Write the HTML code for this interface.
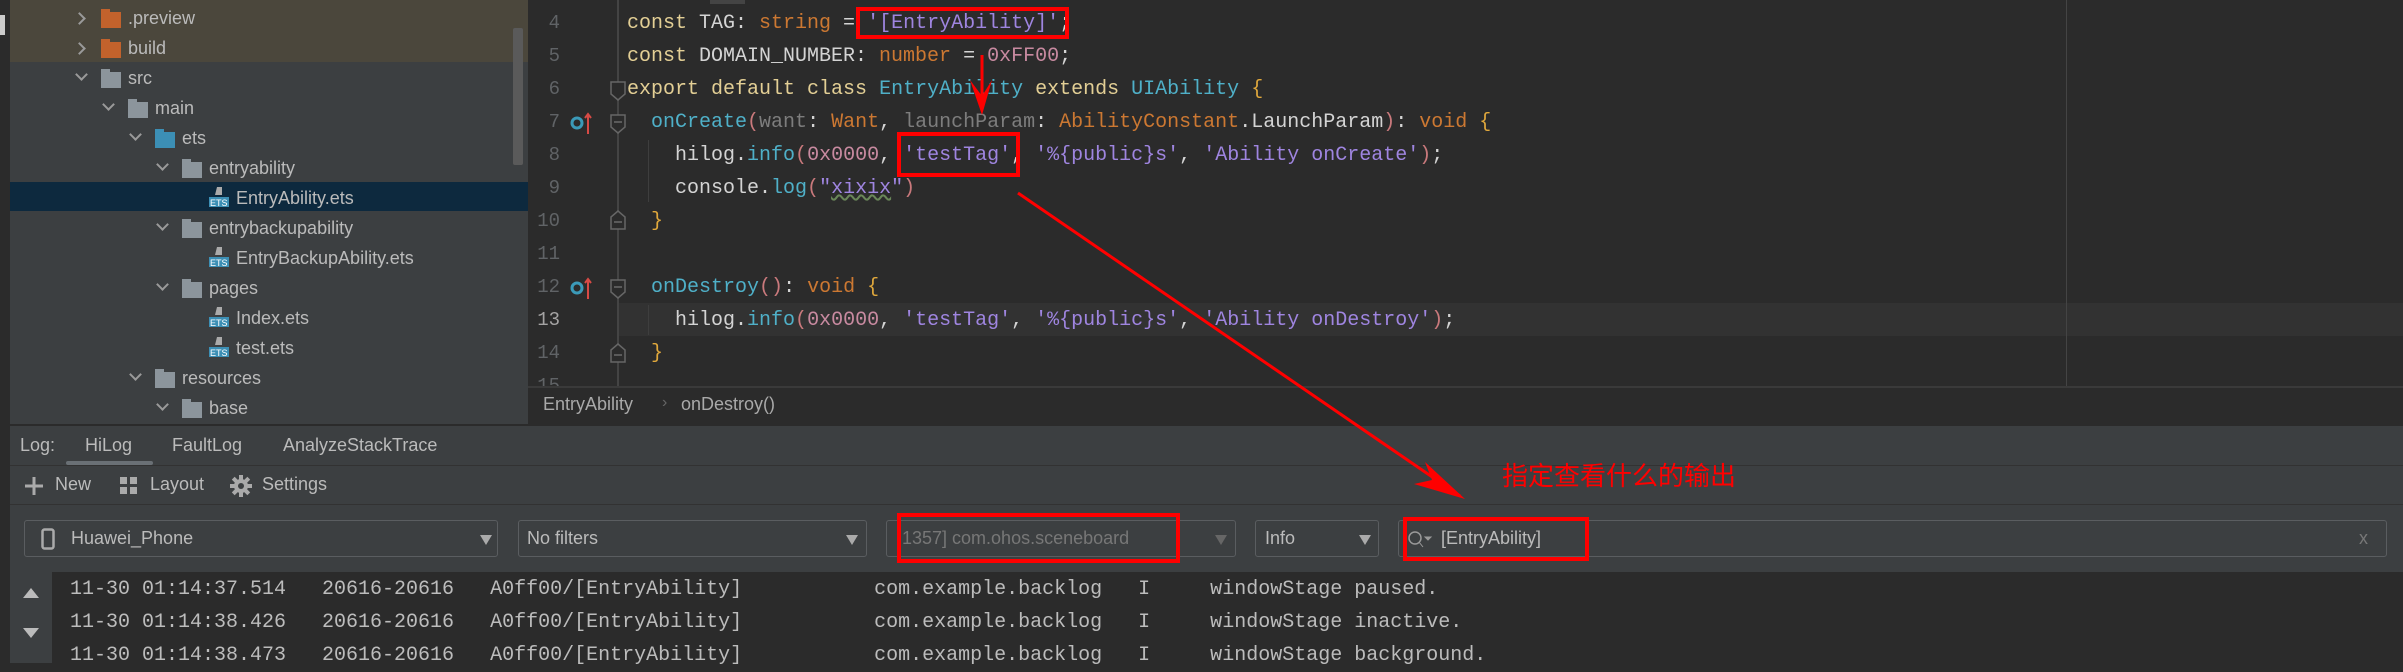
<!DOCTYPE html>
<html><head><meta charset="utf-8"><style>
*{margin:0;padding:0;box-sizing:border-box}
body{width:2403px;height:663px;overflow:hidden;background:#2b2b2b;position:relative;font-family:"Liberation Sans","Noto Sans CJK SC",sans-serif;color:#bbbbbb}
.a{position:absolute}
.tree{left:10px;top:0;width:518px;height:424px;background:#3c3f41}
.row{position:absolute;height:30px;font-size:18px;line-height:30px;color:#bbbbbb;white-space:nowrap}
.chev{position:absolute;width:9px;height:9px;border-right:2px solid #9a9a9a;border-bottom:2px solid #9a9a9a}
.fold{position:absolute;width:20px;height:16px;background:#8c959c}
.fold:before{content:"";position:absolute;left:0;top:-3px;width:9px;height:4px;background:inherit}
.ets{position:absolute;width:20px;height:22px}
.mono{font-family:"Liberation Mono","DejaVu Sans Mono",monospace}
.code{position:absolute;left:627px;font-size:20px;line-height:33px;height:33px;white-space:pre;color:#d4d4d4}
.ln{position:absolute;left:520px;width:40px;text-align:right;font-size:19px;line-height:33px;color:#606366}
.k{color:#e3cf95}.t{color:#cc7832}.s{color:#9f85e0}.f{color:#4fb0c8}.n{color:#c88aa0}.p{color:#c9797c}.g{color:#7d7d7d}.b{color:#e0a83c}
.dd{position:absolute;top:520px;height:37px;border:1px solid #5a5d60;border-radius:3px;background:#3c3f41;font-size:18px;line-height:35px;color:#bbbbbb}
.tri{position:absolute;width:0;height:0;border-left:6px solid transparent;border-right:6px solid transparent;border-top:10px solid #aaa}
.log{position:absolute;left:70px;font-size:20px;line-height:33px;white-space:pre;color:#bcbcbc}
.red{position:absolute;border:4px solid #f00}
</style></head><body>
<!-- left strip -->
<div class="a" style="left:0;top:0;width:10px;height:663px;background:#2b2b2b"></div>
<div class="a" style="left:0;top:15px;width:5px;height:20px;background:#ccc"></div>
<!-- tree -->
<div class="a tree"></div>
<div class="a" style="left:10px;top:0;width:518px;height:62px;background:#4b473c"></div>
<div class="a" style="left:10px;top:182px;width:518px;height:29px;background:#0d293e"></div>
<div class="a" style="left:513px;top:28px;width:10px;height:137px;background:#5a5a5a;border-radius:2px"></div>

<div class="chev" style="left:75px;top:14px;transform:rotate(-45deg)"></div>
<div class="fold" style="left:101px;top:12px;background:#c2622c"></div><div class="row" style="left:128px;top:3px">.preview</div>
<div class="chev" style="left:75px;top:44px;transform:rotate(-45deg)"></div>
<div class="fold" style="left:101px;top:42px;background:#c2622c"></div><div class="row" style="left:128px;top:33px">build</div>
<div class="chev" style="left:77px;top:70px;transform:rotate(45deg)"></div>
<div class="fold" style="left:101px;top:72px"></div><div class="row" style="left:128px;top:63px">src</div>
<div class="chev" style="left:104px;top:100px;transform:rotate(45deg)"></div>
<div class="fold" style="left:128px;top:102px"></div><div class="row" style="left:155px;top:93px">main</div>
<div class="chev" style="left:131px;top:130px;transform:rotate(45deg)"></div>
<div class="fold" style="left:155px;top:132px;background:#3c8fb5"></div><div class="row" style="left:182px;top:123px">ets</div>
<div class="chev" style="left:158px;top:160px;transform:rotate(45deg)"></div>
<div class="fold" style="left:182px;top:162px"></div><div class="row" style="left:209px;top:153px">entryability</div>
<svg class="ets" style="left:209px;top:186px" viewBox="0 0 20 22"><path d="M8 1h5v8H6z" fill="#aaa"/><rect x="0" y="11" width="20" height="10" fill="#3c8fb5"/><text x="1" y="20" font-size="9" fill="#fff" font-family="Liberation Sans">ETS</text></svg>
<div class="row" style="left:236px;top:183px">EntryAbility.ets</div>
<div class="chev" style="left:158px;top:220px;transform:rotate(45deg)"></div>
<div class="fold" style="left:182px;top:222px"></div><div class="row" style="left:209px;top:213px">entrybackupability</div>
<svg class="ets" style="left:209px;top:246px" viewBox="0 0 20 22"><path d="M8 1h5v8H6z" fill="#aaa"/><rect x="0" y="11" width="20" height="10" fill="#3c8fb5"/><text x="1" y="20" font-size="9" fill="#fff" font-family="Liberation Sans">ETS</text></svg>
<div class="row" style="left:236px;top:243px">EntryBackupAbility.ets</div>
<div class="chev" style="left:158px;top:280px;transform:rotate(45deg)"></div>
<div class="fold" style="left:182px;top:282px"></div><div class="row" style="left:209px;top:273px">pages</div>
<svg class="ets" style="left:209px;top:306px" viewBox="0 0 20 22"><path d="M8 1h5v8H6z" fill="#aaa"/><rect x="0" y="11" width="20" height="10" fill="#3c8fb5"/><text x="1" y="20" font-size="9" fill="#fff" font-family="Liberation Sans">ETS</text></svg>
<div class="row" style="left:236px;top:303px">Index.ets</div>
<svg class="ets" style="left:209px;top:336px" viewBox="0 0 20 22"><path d="M8 1h5v8H6z" fill="#aaa"/><rect x="0" y="11" width="20" height="10" fill="#3c8fb5"/><text x="1" y="20" font-size="9" fill="#fff" font-family="Liberation Sans">ETS</text></svg>
<div class="row" style="left:236px;top:333px">test.ets</div>
<div class="chev" style="left:131px;top:370px;transform:rotate(45deg)"></div>
<div class="fold" style="left:155px;top:372px"></div><div class="row" style="left:182px;top:363px">resources</div>
<div class="chev" style="left:158px;top:400px;transform:rotate(45deg)"></div>
<div class="fold" style="left:182px;top:402px"></div><div class="row" style="left:209px;top:393px">base</div>

<!-- editor -->
<div class="a" style="left:528px;top:0;width:1875px;height:388px;background:#2b2b2b"></div>
<div class="a" style="left:710px;top:0;width:35px;height:4px;background:#444"></div>
<div class="a" style="left:617px;top:303px;width:1786px;height:33px;background:#323232"></div>
<div class="a" style="left:617px;top:0;width:2px;height:388px;background:#444"></div>
<div class="a" style="left:2066px;top:0;width:1px;height:388px;background:#444"></div>
<div class="a" style="left:648px;top:140px;width:1px;height:62px;background:#3e3e3e"></div>
<div class="a" style="left:648px;top:305px;width:1px;height:30px;background:#3e3e3e"></div>

<div class="ln mono" style="top:7px">4</div>
<div class="ln mono" style="top:40px">5</div>
<div class="ln mono" style="top:73px">6</div>
<div class="ln mono" style="top:106px">7</div>
<div class="ln mono" style="top:139px">8</div>
<div class="ln mono" style="top:172px">9</div>
<div class="ln mono" style="top:205px">10</div>
<div class="ln mono" style="top:238px">11</div>
<div class="ln mono" style="top:271px">12</div>
<div class="ln mono" style="top:304px;color:#a4a3a3">13</div>
<div class="ln mono" style="top:337px">14</div>
<div class="ln mono" style="top:370px;height:18px;overflow:hidden">15</div>

<svg class="a" style="left:570px;top:110px" width="26" height="26" viewBox="0 0 26 26"><circle cx="7" cy="13" r="5" fill="none" stroke="#3b9ab8" stroke-width="3"/><path d="M18 24V5M15 8l3-4 3 4" stroke="#d74a45" stroke-width="2" fill="none"/></svg>
<svg class="a" style="left:570px;top:275px" width="26" height="26" viewBox="0 0 26 26"><circle cx="7" cy="13" r="5" fill="none" stroke="#3b9ab8" stroke-width="3"/><path d="M18 24V5M15 8l3-4 3 4" stroke="#d74a45" stroke-width="2" fill="none"/></svg>
<svg class="a" style="left:609px;top:80px" width="18" height="22"><path d="M2 2h14v12l-7 6-7-6z" fill="#2b2b2b" stroke="#666" stroke-width="1.5"/></svg>
<svg class="a" style="left:609px;top:113px" width="18" height="22"><path d="M2 2h14v12l-7 6-7-6z" fill="#2b2b2b" stroke="#666" stroke-width="1.5"/><path d="M5 9h8" stroke="#888"/></svg>
<svg class="a" style="left:609px;top:209px" width="18" height="22"><path d="M2 20h14V8L9 2 2 8z" fill="#2b2b2b" stroke="#666" stroke-width="1.5"/><path d="M5 13h8" stroke="#888"/></svg>
<svg class="a" style="left:609px;top:278px" width="18" height="22"><path d="M2 2h14v12l-7 6-7-6z" fill="#2b2b2b" stroke="#666" stroke-width="1.5"/><path d="M5 9h8" stroke="#888"/></svg>
<svg class="a" style="left:609px;top:342px" width="18" height="22"><path d="M2 20h14V8L9 2 2 8z" fill="#2b2b2b" stroke="#666" stroke-width="1.5"/><path d="M5 13h8" stroke="#888"/></svg>

<div class="code mono" style="top:7px"><span class="k">const</span> TAG: <span class="t">string</span> = <span class="s">'[EntryAbility]'</span>;</div>
<div class="code mono" style="top:40px"><span class="k">const</span> DOMAIN_NUMBER: <span class="t">number</span> = <span class="n">0xFF00</span>;</div>
<div class="code mono" style="top:73px"><span class="k">export default class</span> <span class="f">EntryAbility</span> <span class="k">extends</span> <span class="f">UIAbility</span> <span class="b">{</span></div>
<div class="code mono" style="top:106px">  <span class="f">onCreate</span><span class="p">(</span><span class="g">want</span>: <span class="t">Want</span>, <span class="g">launchParam</span>: <span class="t">AbilityConstant</span>.LaunchParam<span class="p">)</span>: <span class="t">void</span> <span class="b">{</span></div>
<div class="code mono" style="top:139px">    hilog.<span class="f">info</span><span class="p">(</span><span class="n">0x0000</span>, <span class="s">'testTag'</span>, <span class="s">'%{public}s'</span>, <span class="s">'Ability onCreate'</span><span class="p">)</span>;</div>
<div class="code mono" style="top:172px">    console.<span class="f">log</span><span class="p">(</span><span class="s">"<span style="text-decoration:underline wavy #6a8759">xixix</span>"</span><span class="p">)</span></div>
<div class="code mono" style="top:205px">  <span class="b">}</span></div>
<div class="code mono" style="top:271px">  <span class="f">onDestroy</span><span class="p">()</span>: <span class="t">void</span> <span class="b">{</span></div>
<div class="code mono" style="top:304px">    hilog.<span class="f">info</span><span class="p">(</span><span class="n">0x0000</span>, <span class="s">'testTag'</span>, <span class="s">'%{public}s'</span>, <span class="s">'Ability onDestroy'</span><span class="p">)</span>;</div>
<div class="code mono" style="top:337px">  <span class="b">}</span></div>

<!-- breadcrumb -->
<div class="a" style="left:528px;top:386px;width:1875px;height:2px;background:#3a3a3a"></div>
<div class="a" style="left:528px;top:388px;width:1875px;height:37px;background:#2b2b2b"></div>
<div class="a" style="left:543px;top:394px;font-size:18px;color:#a9a9a9">EntryAbility</div>
<div class="a" style="left:662px;top:394px;font-size:16px;color:#666">›</div>
<div class="a" style="left:681px;top:394px;font-size:18px;color:#a9a9a9">onDestroy()</div>

<!-- log panel -->
<div class="a" style="left:10px;top:424px;width:2393px;height:2px;background:#2b2b2b"></div>
<div class="a" style="left:10px;top:426px;width:2393px;height:146px;background:#3c3f41"></div>
<div class="a" style="left:10px;top:572px;width:42px;height:91px;background:#3c3f41"></div>
<div class="a" style="left:10px;top:465px;width:2393px;height:1px;background:#323232"></div>
<div class="a" style="left:10px;top:504px;width:2393px;height:1px;background:#323232"></div>
<div class="a" style="left:20px;top:435px;font-size:18px;color:#bbb">Log:</div>
<div class="a" style="left:85px;top:435px;font-size:18px;color:#bbb">HiLog</div>
<div class="a" style="left:66px;top:461px;width:87px;height:4px;background:#6a7075;border-radius:2px"></div>
<div class="a" style="left:172px;top:435px;font-size:18px;color:#bbb">FaultLog</div>
<div class="a" style="left:283px;top:435px;font-size:18px;color:#bbb">AnalyzeStackTrace</div>

<svg class="a" style="left:24px;top:476px" width="20" height="20"><path d="M10 1v18M1 10h18" stroke="#aaa" stroke-width="3"/></svg>
<div class="a" style="left:55px;top:474px;font-size:18px;color:#bbb">New</div>
<svg class="a" style="left:119px;top:476px" width="20" height="20"><rect x="1" y="1" width="7" height="7" fill="#aaa"/><rect x="11" y="1" width="7" height="7" fill="#aaa"/><rect x="1" y="11" width="7" height="7" fill="#aaa"/><rect x="11" y="11" width="7" height="7" fill="#aaa"/></svg>
<div class="a" style="left:150px;top:474px;font-size:18px;color:#bbb">Layout</div>
<svg class="a" style="left:230px;top:475px" width="22" height="22" viewBox="0 0 22 22"><g fill="#aaa"><circle cx="11" cy="11" r="7"/><rect x="9" y="0" width="4" height="22"/><rect x="0" y="9" width="22" height="4"/><rect x="9" y="0" width="4" height="22" transform="rotate(45 11 11)"/><rect x="9" y="0" width="4" height="22" transform="rotate(-45 11 11)"/></g><circle cx="11" cy="11" r="3" fill="#3c3f41"/></svg>
<div class="a" style="left:262px;top:474px;font-size:18px;color:#bbb">Settings</div>

<div class="dd" style="left:24px;width:474px"><svg class="a" style="left:16px;top:7px" width="14" height="22"><rect x="1.5" y="1.5" width="11" height="19" rx="2" fill="none" stroke="#aaa" stroke-width="2.5"/></svg><span style="position:absolute;left:46px">Huawei_Phone</span><div class="tri" style="left:455px;top:14px"></div></div>
<div class="dd" style="left:518px;width:349px"><span style="position:absolute;left:8px">No filters</span><div class="tri" style="left:327px;top:14px"></div></div>
<div class="dd" style="left:886px;width:350px"><span style="position:absolute;left:15px;color:#777">1357] com.ohos.sceneboard</span><div class="tri" style="left:328px;top:14px;border-top-color:#666"></div></div>
<div class="dd" style="left:1255px;width:124px"><span style="position:absolute;left:9px">Info</span><div class="tri" style="left:103px;top:14px"></div></div>
<div class="dd" style="left:1398px;width:989px"><svg class="a" style="left:8px;top:8px" width="26" height="22"><circle cx="8" cy="9" r="6" fill="none" stroke="#999" stroke-width="1.5"/><path d="M12 13l4 5M18 8l3 3 3-3z" stroke="#999" fill="#999"/></svg><span style="position:absolute;left:42px">[EntryAbility]</span><span style="position:absolute;left:960px;color:#777">x</span></div>

<!-- log area -->
<div class="a" style="left:52px;top:572px;width:2351px;height:91px;background:#2b2b2b"></div>
<svg class="a" style="left:22px;top:586px" width="18" height="14"><path d="M1 12L9 2l8 10z" fill="#bbb"/></svg>
<svg class="a" style="left:22px;top:626px" width="18" height="14"><path d="M1 2l8 10 8-10z" fill="#bbb"/></svg>
<div class="log mono" style="top:573px">11-30 01:14:37.514   20616-20616   A0ff00/[EntryAbility]           com.example.backlog   I     windowStage paused.</div>
<div class="log mono" style="top:606px">11-30 01:14:38.426   20616-20616   A0ff00/[EntryAbility]           com.example.backlog   I     windowStage inactive.</div>
<div class="log mono" style="top:639px">11-30 01:14:38.473   20616-20616   A0ff00/[EntryAbility]           com.example.backlog   I     windowStage background.</div>

<!-- annotations -->
<div class="red" style="left:856px;top:7px;width:213px;height:32px"></div>
<div class="red" style="left:897px;top:132px;width:123px;height:45px"></div>
<div class="red" style="left:897px;top:513px;width:283px;height:50px"></div>
<div class="red" style="left:1403px;top:517px;width:186px;height:44px"></div>
<svg class="a" style="left:0;top:0" width="2403" height="663">
<path d="M982 55V108" stroke="#f00" stroke-width="3"/>
<path d="M970 80L982 115 992 80 982 96z" fill="#f00"/>
<path d="M1018 193L1460 496" stroke="#f00" stroke-width="3"/>
<path d="M1425 462L1465 499 1414 484 1432 480z" fill="#f00"/>
</svg>
<div class="a" style="left:1502px;top:460px;font-size:26px;color:#f00;font-family:'Noto Sans CJK SC',sans-serif;line-height:30px">指定查看什么的输出</div>
</body></html>
